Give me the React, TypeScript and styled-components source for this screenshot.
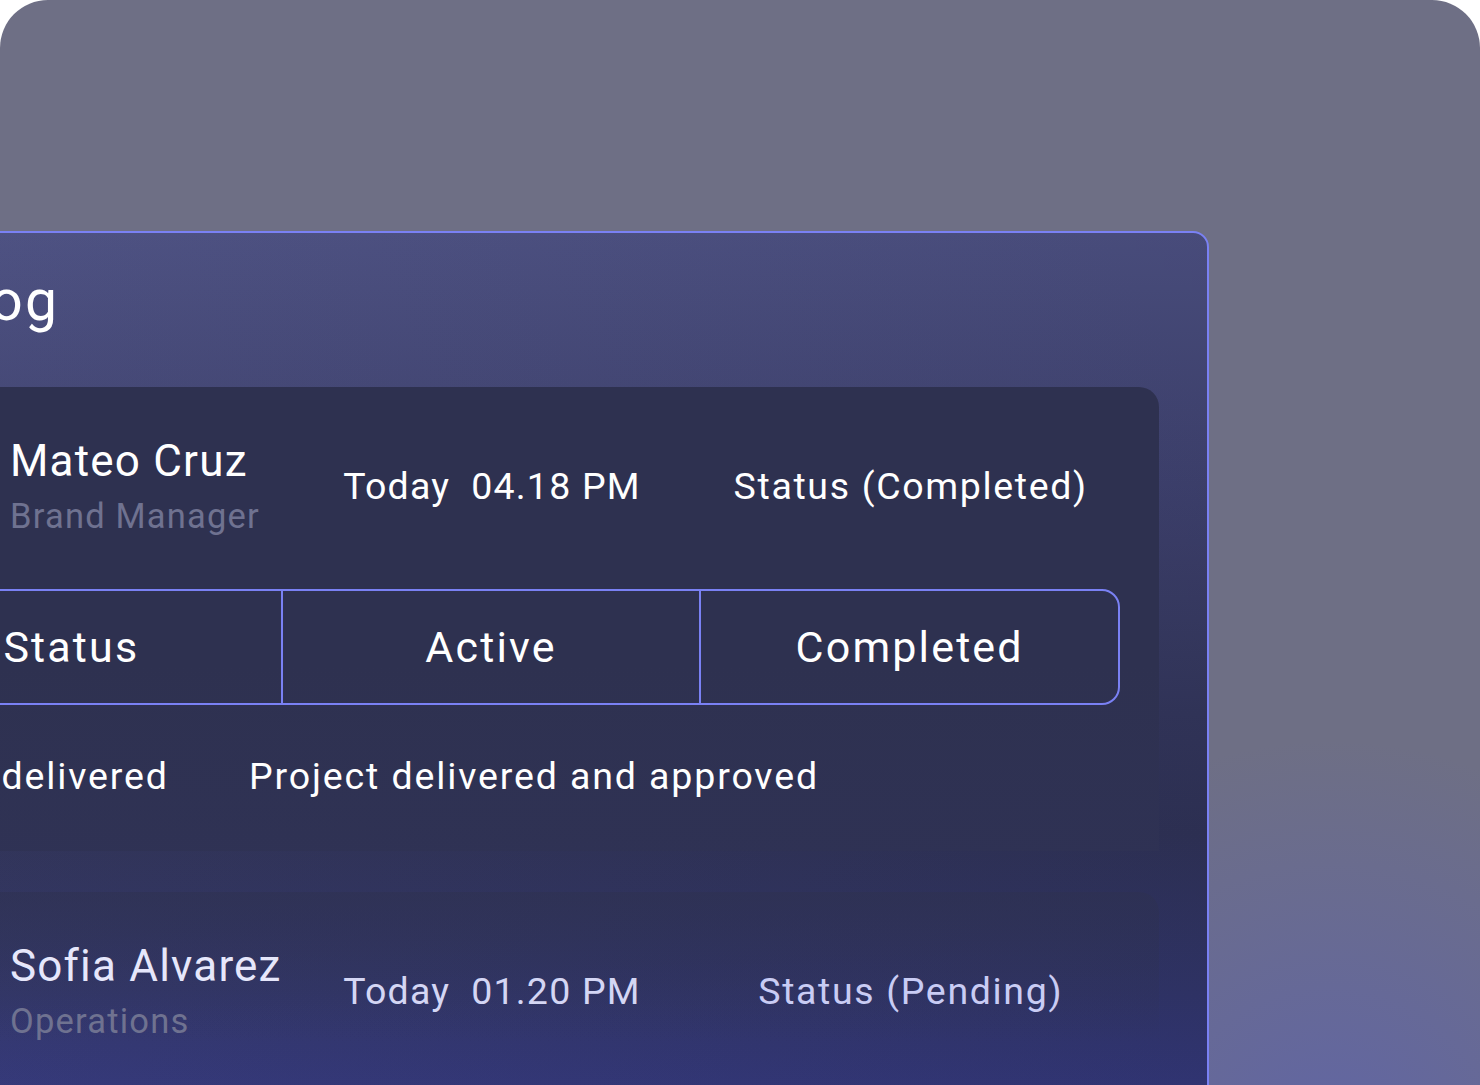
import styled, { createGlobalStyle } from 'styled-components';

const GlobalStyle = createGlobalStyle`
  html, body {
    margin: 0;
    padding: 0;
    background: #ffffff;
    overflow: hidden;
  }
  * {
    box-sizing: border-box;
  }
  body {
    font-family: Roboto, "Noto Sans", "Liberation Sans", sans-serif;
  }
`;

type Entry = {
  id: number;
  name: string;
  role: string;
  time: string;
  status: string;
  note: string;
  noteValue: string;
  pending?: boolean;
};

const entries: Entry[] = [
  {
    id: 1,
    name: 'Mateo Cruz',
    role: 'Brand Manager',
    time: 'Today\u00a0\u00a004.18 PM',
    status: 'Status (Completed)',
    note: 'Project delivered',
    noteValue: 'Project delivered and approved',
  },
  {
    id: 2,
    name: 'Sofia Alvarez',
    role: 'Operations',
    time: 'Today\u00a0\u00a001.20 PM',
    status: 'Status (Pending)',
    note: 'Awaiting review',
    noteValue: 'Waiting for final sign-off',
    pending: true,
  },
];

const steps = ['Status', 'Active', 'Completed'];

const App = () => {
  return (
    <>
      <GlobalStyle />
      <Stage>
        <LogCard>
          <Title>Activity Log</Title>
          <EntryList>
            {entries.map((entry) => (
              <EntryCard key={entry.id} $pending={entry.pending}>
                <Summary>
                  <Person>
                    <Avatar />
                    <div>
                      <Name $pending={entry.pending}>{entry.name}</Name>
                      <Role>{entry.role}</Role>
                    </div>
                  </Person>
                  <Time $pending={entry.pending}>{entry.time}</Time>
                  <StatusText $pending={entry.pending}>{entry.status}</StatusText>
                </Summary>
                <Segments>
                  {steps.map((step) => (
                    <Segment key={step}>{step}</Segment>
                  ))}
                </Segments>
                <Detail>
                  <NoteLabel>{entry.note}</NoteLabel>
                  <span>{entry.noteValue}</span>
                </Detail>
              </EntryCard>
            ))}
          </EntryList>
        </LogCard>
      </Stage>
    </>
  );
};

export default App;

const Stage = styled.main`
  height: 1085px;
  padding-top: 231px;
  border-radius: 48px 48px 0 0;
  overflow: hidden;
  background:
    radial-gradient(circle at 1330px 1160px, rgba(94, 99, 170, 0.85) 0px, rgba(94, 99, 170, 0) 420px),
    #6e6f85;
`;

const LogCard = styled.section`
  margin-left: -300px;
  width: 1509px;
  min-height: 1200px;
  padding: 39px 48px 0;
  border: 2px solid #7a81f4;
  border-radius: 0 16px 0 0;
  background:
    linear-gradient(90deg, rgba(255, 255, 255, 0.02), rgba(0, 0, 0, 0.06)),
    linear-gradient(180deg, #4c5082 0px, #3f4270 250px, #33365c 480px, #2f3257 600px, #31356a 760px, #33377a 860px);
`;

const Title = styled.h1`
  margin: 0 0 57px -14px;
  font-size: 57px;
  line-height: 58px;
  font-weight: 400;
  letter-spacing: 0.04em;
  color: #ffffff;
  white-space: nowrap;
`;

const EntryList = styled.div`
  display: flex;
  flex-direction: column;
  gap: 41px;
`;

const EntryCard = styled.article<{ $pending?: boolean }>`
  padding: 0 39px 53px 114px;
  border-radius: 0 20px 0 0;
  background: ${({ $pending }) =>
    $pending
      ? 'linear-gradient(180deg, rgba(46, 49, 80, 0.55) 0px, rgba(46, 49, 80, 0) 150px)'
      : 'linear-gradient(180deg, #2e3150 0%, #2e3150 60%, rgba(47, 50, 84, 0.9) 100%)'};
`;

const Summary = styled.div`
  display: grid;
  grid-template-columns: repeat(3, 1fr);
  align-items: center;
  height: 197px;
  white-space: nowrap;
  letter-spacing: 1.2px;
`;

const Person = styled.div`
  display: flex;
  align-items: center;
  gap: 46px;
`;

const Avatar = styled.div`
  width: 100px;
  height: 100px;
  border-radius: 50%;
  background: #4a4e80;
  flex-shrink: 0;
`;

const Name = styled.div<{ $pending?: boolean }>`
  font-size: 44px;
  line-height: 51px;
  color: ${({ $pending }) => ($pending ? '#e6e7fb' : '#ffffff')};
`;

const Role = styled.div`
  margin-top: 9px;
  font-size: 34.5px;
  line-height: 40px;
  color: #6f7290;
`;

const Time = styled.div<{ $pending?: boolean }>`
  text-align: center;
  font-size: 37.5px;
  line-height: 44px;
  color: ${({ $pending }) => ($pending ? '#d4d6f4' : '#ffffff')};
`;

const StatusText = styled.div<{ $pending?: boolean }>`
  text-align: center;
  font-size: 37.5px;
  line-height: 44px;
  letter-spacing: 1.65px;
  color: ${({ $pending }) => ($pending ? '#c9ccf4' : '#ffffff')};
`;

const Segments = styled.div`
  display: grid;
  grid-template-columns: repeat(3, 1fr);
  height: 116px;
  margin-top: 5px;
  margin-left: -4px;
  border: 2px solid #7a81f4;
  border-radius: 0 18px 18px 0;
`;

const Segment = styled.div`
  display: flex;
  align-items: center;
  justify-content: center;
  font-size: 43px;
  letter-spacing: 0.05em;
  color: #ffffff;

  & + & {
    border-left: 2px solid #7a81f4;
  }
`;

const Detail = styled.div`
  display: grid;
  grid-template-columns: 385px 1fr;
  padding-top: 49px;
  font-size: 37.5px;
  line-height: 44px;
  letter-spacing: 0.05em;
  color: #ffffff;
  white-space: nowrap;
`;

const NoteLabel = styled.span`
  margin-left: -5px;
`;
